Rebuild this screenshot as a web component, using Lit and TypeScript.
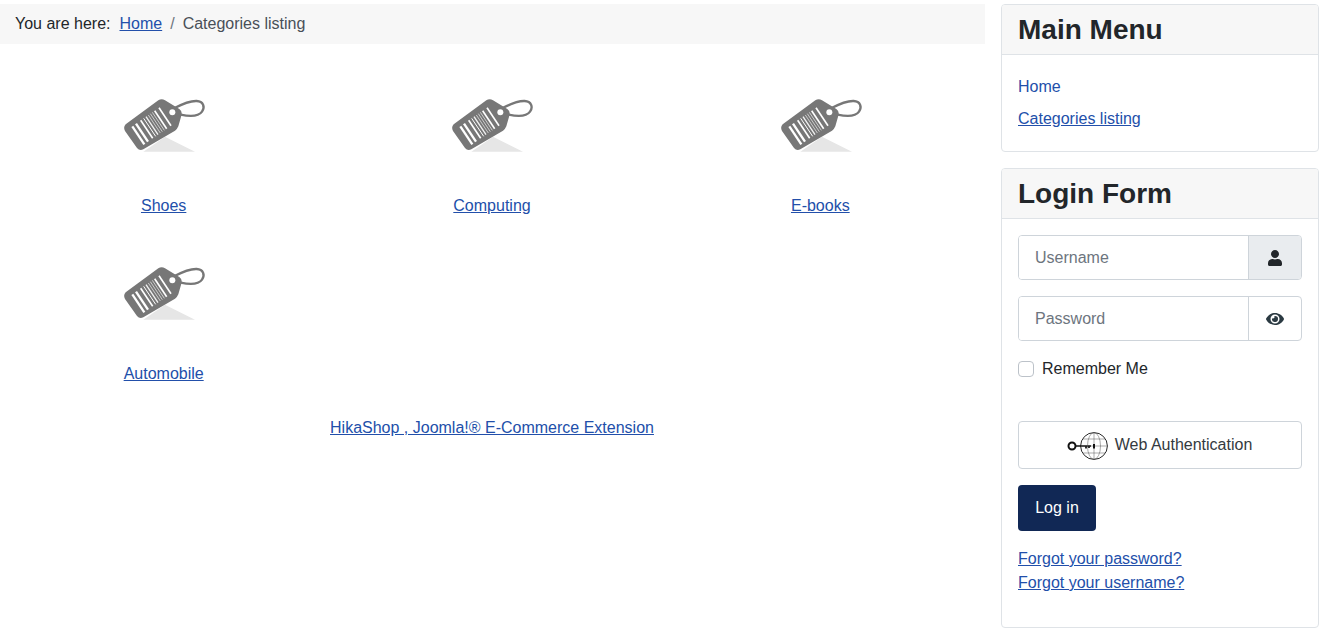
import { LitElement, html, css, svg } from "lit";
import { customElement } from "lit/decorators.js";

const tag = html`<svg class="tag" width="110" height="80" viewBox="0 0 330 240" aria-hidden="true">
  <polygon points="165,155 255,200 100,200" fill="#e6e6e6"/>
  <path d="M192 70 C215 58 238 47 260 48 C280 49 286 66 276 80 C266 94 240 95 212 89" fill="none" stroke="#777" stroke-width="7"/>
  <path d="M47 118 L145 46 Q155 40 165 46 L208 72 Q218 79 214 92 L205 124 Q202 132 195 137 L100 193 Q89 199 81 189 L45 138 Q39 126 47 118 Z" fill="#777"/>
  <circle cx="187" cy="82" r="9" fill="#fff"/>
  ${[[67,124,7,1],[78,116,7,1],[92,106,5,1],[101,100,3,1],[108,95,4,.9],[115,90,2.5,.75],[121,86,2.5,.75],[127,82,2.5,.75],[134,77,5,1],[147,68,5,1]].map(([x,y,w,o]) =>
    svg`<line x1="${x}" y1="${y}" x2="${x + 36}" y2="${y + 54}" stroke="#fff" stroke-width="${w}" opacity="${o}"/>`)}
</svg>`;

const categories = ["Shoes", "Computing", "E-books", "Automobile"];

@customElement("app-root")
export class AppRoot extends LitElement {
  static styles = css`
    :host { display: block; font-family: "Liberation Sans", Arial, sans-serif; font-size: 16px; line-height: 24px; color: #22262a; background: #fff; }
    a { color: #224faa; }
    .page { display: flex; gap: 16px; padding: 4px 5px 6px 0; align-items: flex-start; }
    .main { width: 985px; flex: none; }
    .crumbs { display: flex; align-items: center; height: 40px; padding: 0 15px; background: #f7f7f7; box-sizing: border-box; }
    .crumbs .here { margin-right: 9px; }
    .crumbs .sep { color: #6d757e; padding: 0 8px; }
    .crumbs .cur { color: #495057; }
    .grid { display: grid; grid-template-columns: repeat(3, 1fr); padding-top: 41px; }
    .cat { display: flex; flex-direction: column; align-items: center; height: 168px; padding-right: 1px; }
    .tag { display: block; margin: 0 0 0 3px; filter: blur(0.4px); }
    .cat a { margin-top: 29px; }
    .foot { text-align: center; margin-top: -5px; padding-right: 1px; }
    .side { flex: 1; display: flex; flex-direction: column; gap: 16px; min-width: 0; }
    .card { border: 1px solid #dfe3e7; border-radius: 4px; background: #fff; }
    .card h3 { margin: 0; padding: 0 16px; height: 49px; line-height: 49px; font-size: 28px; font-weight: 700; background: #f7f7f7; border-bottom: 1px solid #dfe3e7; border-radius: 3px 3px 0 0; box-sizing: content-box; }
    .menu { list-style: none; margin: 0; padding: 20px 16px; display: flex; flex-direction: column; gap: 8px; }
    .menu a.plain { text-decoration: none; }
    .login { padding: 16px; display: flex; flex-direction: column; height: 376px; }
    .group { display: flex; height: 45px; border: 1px solid #ced4da; border-radius: 4px; box-sizing: border-box; margin-bottom: 16px; overflow: hidden; }
    .group input { flex: 1; min-width: 0; border: 0; outline: 0; padding: 0 16px; font: inherit; color: #22262a; background: #fff; }
    .group input::placeholder { color: #6d757e; opacity: 1; }
    .addon { width: 53px; flex: none; display: flex; align-items: center; justify-content: center; border-left: 1px solid #ced4da; box-sizing: border-box; }
    .addon.fill { background: #e9ecef; }
    .remember { display: flex; align-items: center; gap: 8px; margin: 0 0 40px; height: 24px; }
    .remember input { appearance: none; width: 16px; height: 16px; margin: 0; border: 1px solid #bcc2c9; border-radius: 4px; background: #fff; }
    .webauthn { display: flex; align-items: center; justify-content: center; gap: 6px; height: 48px; border: 1px solid #ced4da; border-radius: 4px; background: #fff; font: inherit; color: #343a40; margin-bottom: 16px; padding: 0; }
    .webauthn svg { margin: 2px 1px 0 -1px; }
    .submit { align-self: flex-start; width: 78px; height: 46px; border: 0; border-radius: 4px; background: #112855; color: #fff; font: inherit; padding: 0; margin-bottom: 16px; }
  `;

  render() {
    return html`<div class="page">
      <div class="main">
        <nav class="crumbs"><span class="here">You are here:</span><a href="#">Home</a><span class="sep">/</span><span class="cur">Categories listing</span></nav>
        <div class="grid">
          ${categories.map((c) => html`<div class="cat">${tag}<a href="#">${c}</a></div>`)}
        </div>
        <div class="foot"><a href="#">HikaShop , Joomla!® E-Commerce Extension</a></div>
      </div>
      <aside class="side">
        <section class="card">
          <h3>Main Menu</h3>
          <ul class="menu">
            <li><a class="plain" href="#">Home</a></li>
            <li><a href="#">Categories listing</a></li>
          </ul>
        </section>
        <section class="card">
          <h3>Login Form</h3>
          <form class="login">
            <div class="group"><input placeholder="Username" /><span class="addon fill">
              <svg width="14" height="16" viewBox="0 0 448 512" fill="#22262a"><path d="M224 256c70.7 0 128-57.3 128-128S294.7 0 224 0 96 57.3 96 128s57.3 128 128 128zm89.6 32h-16.7c-22.2 10.2-46.9 16-72.9 16s-50.6-5.8-72.9-16h-16.7C60.2 288 0 348.2 0 422.4V464c0 26.5 21.5 48 48 48h352c26.5 0 48-21.5 48-48v-41.6c0-74.2-60.2-134.4-134.4-134.4z"/></svg>
            </span></div>
            <div class="group"><input placeholder="Password" /><span class="addon">
              <svg width="18" height="16" viewBox="0 0 576 512" fill="#2b3a42"><path d="M572.52 241.4C518.29 135.59 410.93 64 288 64S57.68 135.64 3.48 241.41a32.35 32.35 0 0 0 0 29.19C57.71 376.41 165.07 448 288 448s230.32-71.64 284.52-177.41a32.35 32.35 0 0 0 0-29.19zM288 400a144 144 0 1 1 144-144 143.93 143.93 0 0 1-144 144zm0-240a95.31 95.31 0 0 0-25.31 3.79 47.85 47.85 0 0 1-66.9 66.9A95.78 95.78 0 1 0 288 160z"/></svg>
            </span></div>
            <label class="remember"><input type="checkbox" />Remember Me</label>
            <button type="button" class="webauthn">
              <svg width="41" height="30" viewBox="0 0 41 30" fill="none" stroke="#111">
                <circle cx="5" cy="15" r="3.5" stroke-width="2"/>
                <path d="M8.5 15H24M19 15v2.5M22 15v2" stroke-width="1.7"/>
                <circle cx="27" cy="15" r="13.4" stroke-width=".9"/>
                <ellipse cx="27" cy="15" rx="6.5" ry="13.4" stroke="#555" stroke-width=".5"/>
                <path d="M27 2V28M14 15H40M16 8h22M16 22h22" stroke="#555" stroke-width=".5"/>
                <path d="M27 13v4.5" stroke-width="2"/>
              </svg>
              Web Authentication
            </button>
            <button type="button" class="submit">Log in</button>
            <a href="#">Forgot your password?</a>
            <a href="#">Forgot your username?</a>
          </form>
        </section>
      </aside>
    </div>`;
  }
}
